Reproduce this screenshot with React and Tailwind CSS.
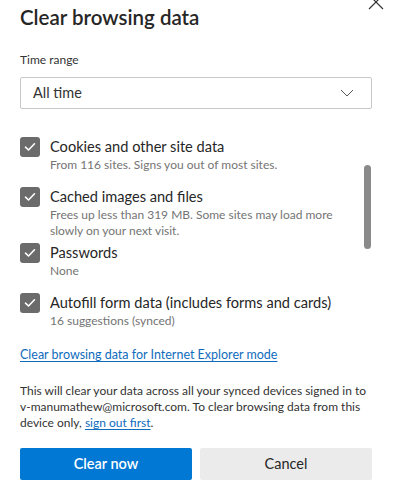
import React from "react";

const items = [
  { title: "Cookies and other site data", desc: "From 116 sites. Signs you out of most sites." },
  { title: "Cached images and files", desc: "Frees up less than 319 MB. Some sites may load more slowly on your next visit." },
  { title: "Passwords", desc: "None" },
  { title: "Autofill form data (includes forms and cards)", desc: "16 suggestions (synced)" },
];

function CheckBox() {
  return (
    <span className="w-5 h-5 rounded-[3px] bg-[#6b6b6b] flex items-center justify-center shrink-0">
      <svg width="12" height="10" viewBox="0 0 12 10" fill="none">
        <path d="M1.5 5.2 L4.5 8 L10.5 1.8" stroke="white" strokeWidth="1.6" strokeLinecap="round" strokeLinejoin="round" />
      </svg>
    </span>
  );
}

export default function App() {
  return (
    <div className="relative w-[394px] h-[496px] bg-white overflow-hidden text-[#262626]" style={{ fontFamily: 'Lato, sans-serif' }}>
      {/* close button, cut off at top */}
      <svg className="absolute left-[366px] top-[-8px]" width="20" height="20" viewBox="0 0 20 20">
        <path d="M3 3 L17 17 M17 3 L3 17" stroke="#333" strokeWidth="1.2" />
      </svg>

      <div className="pl-5 pr-[22px] pt-[3px]">
        <h1 className="text-[20.5px] leading-[28px] font-semibold">Clear browsing data</h1>

        <p className="mt-[21px] text-[12px] leading-4 text-[#333]">Time range</p>
        <div className="mt-[9px] h-[32px] border border-[#c8c8c8] rounded-[2px] flex items-center justify-between pl-3 pr-[17px]">
          <span className="text-[14.5px] text-[#333]">All time</span>
          <svg width="14" height="8" viewBox="0 0 14 8" fill="none">
            <path d="M1 1 L7 7 L13 1" stroke="#555" strokeWidth="1" />
          </svg>
        </div>

        {/* scrollable list */}
        <div className="relative mt-[28px] h-[210px]">
          <div className="flex flex-col pr-7">
            {items.map((item, i) => (
              <div key={i} className="flex gap-[10px] min-h-[50px] pb-1">
                <CheckBox />
                <div className="flex flex-col">
                  <span className="text-[14.6px] leading-5 text-[#262626]">{item.title}</span>
                  <span className="text-[12px] leading-4 text-[#747474]">{item.desc}</span>
                </div>
              </div>
            ))}
          </div>
          <div className="absolute right-[1px] top-[28px] w-[7px] h-[84px] rounded-full bg-[#8a8a8a]" />
        </div>

        <a className="block text-[12.5px] leading-4 text-[#0f6cbd] underline underline-offset-2">
          Clear browsing data for Internet Explorer mode
        </a>

        <p className="mt-[20px] text-[12px] leading-4 text-[#333]">
          This will clear your data across all your synced devices signed in to v-manumathew@microsoft.com. To clear browsing data from this device only,{" "}
          <span className="text-[#0f6cbd] underline underline-offset-2">sign out first</span>.
        </p>

        <div className="mt-[17px] grid grid-cols-2 gap-2">
          <button className="h-8 rounded-[2px] bg-[#0078d4] text-white text-[14.5px] font-semibold">Clear now</button>
          <button className="h-8 rounded-[2px] bg-[#ebebeb] text-[#262626] text-[14.5px]">Cancel</button>
        </div>
      </div>
    </div>
  );
}
